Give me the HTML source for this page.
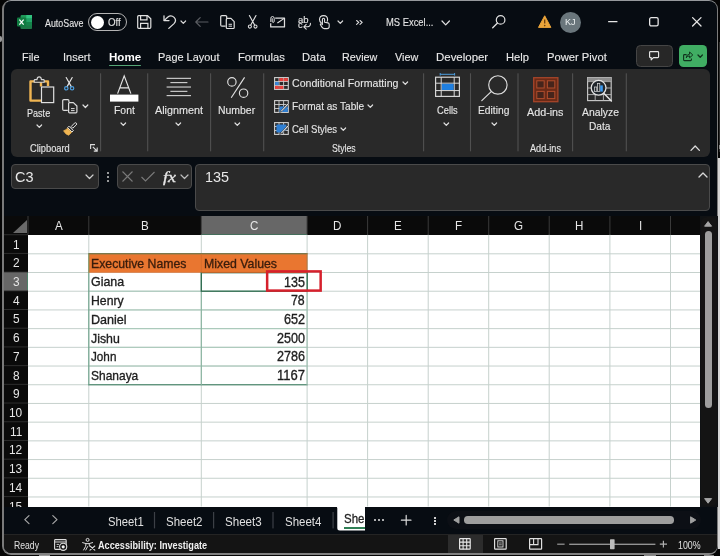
<!DOCTYPE html>
<html lang="en">
<head>
<meta charset="utf-8">
<title>MS Excel</title>
<style>
*{box-sizing:border-box;margin:0;padding:0}
html,body{width:720px;height:556px;overflow:hidden;background:#050505}
body{position:relative;font-family:"Liberation Sans",sans-serif;color:#e6e6e6;font-size:12px}
.abs{position:absolute}
svg{overflow:visible}
#win{position:absolute;left:2px;top:0;width:716px;height:555px;background:#070c12;border-style:solid;border-color:#96999c #7c7c7c #818181 #7a7a7a;border-width:1px 1px 2px 2px;border-radius:9px}
#app{position:absolute;left:0;top:0;width:720px;height:556px;overflow:hidden;will-change:transform}
.t{position:absolute;white-space:nowrap;line-height:20px;height:20px}
.t span{display:inline-block;transform-origin:0 50%}
</style>
</head>
<body>
<div id="win"></div>
<div id="app">
<!-- ===== title bar ===== -->
<svg class="abs" style="left:17px;top:15px;" width="15" height="14" viewBox="0 0 15 14"><rect x="3.6" y="0" width="11.4" height="14" rx="1.2" fill="#1f9a5a"/><rect x="9.3" y="0" width="5.7" height="3.5" fill="#33c481"/><rect x="9.3" y="3.5" width="5.7" height="3.5" fill="#21a366"/><rect x="3.6" y="3.5" width="5.7" height="3.5" fill="#107c41"/><rect x="3.6" y="7" width="11.4" height="7" fill="#185c37" opacity="0.55"/><rect x="9.3" y="7" width="5.7" height="3.5" fill="#13854a"/><rect x="0" y="2.6" width="9" height="9" rx="1" fill="#107c41"/><path d="M2.4 4.6 L6.6 9.6 M6.6 4.6 L2.4 9.6" stroke="#ffffff" stroke-width="1.25" fill="none"/></svg>
<div class="t" style="left:45px;top:13px;font-size:10.2px;color:#e4e4e4;transform:translate3d(0,0.50px,0);-webkit-text-stroke:0.12px currentColor;"><span style="transform:scaleX(0.8704)">AutoSave</span></div>
<div class="abs" style="left:88.2px;top:13px;width:38.6px;height:18.2px;border:1.3px solid #b4b4b4;border-radius:9.1px;"></div>
<div class="abs" style="left:91.2px;top:15.6px;width:13px;height:13px;background:#ffffff;border-radius:50%;"></div>
<div class="t" style="left:108px;top:13px;font-size:10.2px;color:#e4e4e4;transform:translate3d(0,0.30px,0);-webkit-text-stroke:0.1px currentColor;"><span style="transform:scaleX(0.9540)">Off</span></div>
<svg class="abs" style="left:137px;top:15px;" width="14.5" height="14" viewBox="0 0 14.5 14"><path d="M1.6 0.7 H10.6 L13.8 3.8 V12.2 Q13.8 13.3 12.7 13.3 H1.8 Q0.7 13.3 0.7 12.2 V1.7 Q0.7 0.7 1.6 0.7 Z" fill="none" stroke="#e0e0e0" stroke-width="1.2" stroke-linejoin="round"/><path d="M3.6 0.9 V4.8 H10 V0.9" fill="none" stroke="#e0e0e0" stroke-width="1.2"/><path d="M3.6 13.2 V8.3 H10.9 V13.2" fill="none" stroke="#e0e0e0" stroke-width="1.2"/></svg>
<svg class="abs" style="left:162.5px;top:15px;" width="13.5" height="14" viewBox="0 0 13.5 14"><path d="M1 0.8 V5.6 H6" fill="none" stroke="#e0e0e0" stroke-width="1.25" stroke-linecap="round" stroke-linejoin="round"/><path d="M1.3 5.4 L4.6 2.3 Q8 -0.4 11.1 2.4 Q14 5.6 11 8.6 L5.8 13.4" fill="none" stroke="#e0e0e0" stroke-width="1.25" stroke-linecap="round" stroke-linejoin="round"/></svg>
<svg class="abs" style="left:179.0px;top:18.6px;" width="8.6" height="6.4" viewBox="0 0 8.6 6.4"><path d="M2 2 L4.3 4.4 L6.6 2" fill="none" stroke="#d8d8d8" stroke-width="1.2" stroke-linecap="round" stroke-linejoin="round"/></svg>
<svg class="abs" style="left:195px;top:17px;" width="13" height="10" viewBox="0 0 13 10"><path d="M13 5 H1 M5.2 0.6 L0.8 5 L5.2 9.4" fill="none" stroke="#5a5d62" stroke-width="1.2" stroke-linecap="round" stroke-linejoin="round"/></svg>
<svg class="abs" style="left:220px;top:15px;" width="15" height="14.2" viewBox="0 0 15 14.2"><path d="M5.6 11.2 H2 Q0.7 11.2 0.7 10 V1.8 Q0.7 0.7 1.9 0.7 H5.6 Q6.7 0.7 6.7 1.8 V3.2" fill="none" stroke="#e0e0e0" stroke-width="1.2"/><path d="M6.3 4.4 Q6.3 3.4 7.3 3.4 H11 L14.2 6.6 V12.4 Q14.2 13.5 13.2 13.5 H7.3 Q6.3 13.5 6.3 12.4 Z" fill="none" stroke="#e0e0e0" stroke-width="1.2" stroke-linejoin="round"/><path d="M8.6 9.3 H12 M8.6 11.2 H12" stroke="#e0e0e0" stroke-width="1" fill="none"/></svg>
<svg class="abs" style="left:248px;top:15.3px;" width="9.4" height="13.8" viewBox="0 0 9.4 13.8"><path d="M1.4 0.5 L6.6 10 M8 0.5 L2.8 10" fill="none" stroke="#e0e0e0" stroke-width="1.15" stroke-linecap="round"/><circle cx="1.9" cy="11.6" r="1.55" fill="none" stroke="#e0e0e0" stroke-width="1.05"/><circle cx="7.5" cy="11.6" r="1.55" fill="none" stroke="#e0e0e0" stroke-width="1.05"/></svg>
<svg class="abs" style="left:270px;top:15.5px;" width="15.2" height="11.6" viewBox="0 0 15.2 11.6"><path d="M5.2 2.1 H14.5 V10.9 H0.7 V7.2" fill="none" stroke="#e0e0e0" stroke-width="1.25" stroke-linejoin="round"/><path d="M7.4 7 L14.2 2.4" fill="none" stroke="#e0e0e0" stroke-width="1.1"/><path d="M0.8 5.6 V2.4 Q0.8 0.5 2.5 0.5 Q4.2 0.5 4.2 2.4 V5.2 Q4.2 6.4 3.2 6.4 Q2.2 6.4 2.2 5.2 V2.6" fill="none" stroke="#e0e0e0" stroke-width="1" stroke-linecap="round"/></svg>
<div class="t" style="left:298px;top:9px;font-size:9.6px;color:#e4e4e4;transform:translate3d(0,0.50px,0);-webkit-text-stroke:0.12px currentColor;"><span style="transform:scaleX(0.9926)">ab</span></div>
<div class="t" style="left:298px;top:15px;font-size:9.6px;color:#e4e4e4;-webkit-text-stroke:0.12px currentColor;"><span style="transform:scaleX(0.9583)">c</span></div>
<svg class="abs" style="left:302.5px;top:22.5px;" width="8" height="6.5" viewBox="0 0 8 6.5"><path d="M7.4 0.4 Q7.6 3.6 4.6 3.8 H1 M3.2 1.4 L0.8 3.8 L3.2 6.1" fill="none" stroke="#e0e0e0" stroke-width="1.1" stroke-linecap="round" stroke-linejoin="round"/></svg>
<svg class="abs" style="left:319px;top:15px;" width="10.8" height="14.2" viewBox="0 0 10.8 14.2"><path d="M2.2 7.8 Q0.5 6.6 0.5 4.6 Q0.5 0.6 4.6 0.6 Q8.6 0.6 8.6 4.6 Q8.6 5.6 8.2 6.2" fill="none" stroke="#e0e0e0" stroke-width="1.1" stroke-linecap="round"/><path d="M3.4 9.6 V4.4 Q3.4 3.2 4.5 3.2 Q5.6 3.2 5.6 4.4 V7.2 L9 7.9 Q10.2 8.2 10.2 9.4 V11.4 Q10.2 13.6 8 13.6 H5.4 Q4 13.6 3.2 12.4 L1.4 9.8 Q1.2 9 2 8.8 Q2.7 8.7 3.4 9.6 Z" fill="none" stroke="#e0e0e0" stroke-width="1.1" stroke-linejoin="round"/></svg>
<svg class="abs" style="left:335.7px;top:18.7px;" width="8.6" height="6.4" viewBox="0 0 8.6 6.4"><path d="M2 2 L4.3 4.4 L6.6 2" fill="none" stroke="#d8d8d8" stroke-width="1.2" stroke-linecap="round" stroke-linejoin="round"/></svg>
<svg class="abs" style="left:356.4px;top:20.4px;" width="7" height="4.8" viewBox="0 0 7 4.8"><path d="M0.6 0.5 L2.8 2.4 L0.6 4.3 M4 0.5 L6.2 2.4 L4 4.3" fill="none" stroke="#e0e0e0" stroke-width="1.1" stroke-linecap="round" stroke-linejoin="round"/></svg>
<div class="t" style="left:386px;top:12px;font-size:10.6px;color:#e4e4e4;transform:translate3d(0,0.30px,0);-webkit-text-stroke:0.12px currentColor;"><span style="transform:scaleX(0.8862)">MS Excel...</span></div>
<svg class="abs" style="left:439.5px;top:18.650000000000002px;" width="11.4" height="7.9" viewBox="0 0 11.4 7.9"><path d="M2 2 L5.7 5.9 L9.4 2" fill="none" stroke="#e0e0e0" stroke-width="1.25" stroke-linecap="round" stroke-linejoin="round"/></svg>
<svg class="abs" style="left:491.8px;top:15.4px;" width="13.6" height="13.6" viewBox="0 0 13.6 13.6"><circle cx="8.6" cy="4.9" r="4.3" fill="none" stroke="#e0e0e0" stroke-width="1.2"/><path d="M5.5 8 L0.7 12.8" stroke="#e0e0e0" stroke-width="1.3" stroke-linecap="round" fill="none"/></svg>
<svg class="abs" style="left:537.6px;top:15.2px;" width="13.4" height="13.2" viewBox="0 0 13.4 13.2"><path d="M6.7 0.8 L12.9 12.4 H0.5 Z" fill="#eba53a" stroke="#eba53a" stroke-width="1" stroke-linejoin="round"/><path d="M6.7 4.6 V8.6" stroke="#6b3f10" stroke-width="1.3" fill="none"/><circle cx="6.7" cy="10.6" r="0.8" fill="#6b3f10"/></svg>
<div class="abs" style="left:559.6px;top:11.6px;width:21px;height:21px;background:#6a767c;border-radius:50%;"></div>
<div class="t" style="left:565px;top:12px;font-size:9.4px;color:#eef2f3;transform:translate3d(0,0.30px,0);-webkit-text-stroke:0;"><span style="transform:scaleX(0.9663)">KJ</span></div>
<svg class="abs" style="left:607.5px;top:21.2px;" width="9.6" height="1.4" viewBox="0 0 9.6 1.4"><rect x="0" y="0" width="9.6" height="1.3" rx="0.6" fill="#e6e6e6"/></svg>
<svg class="abs" style="left:649.2px;top:17.3px;" width="9.8" height="9.6" viewBox="0 0 9.8 9.6"><rect x="0.65" y="0.65" width="8.5" height="8.3" rx="1.6" fill="none" stroke="#e6e6e6" stroke-width="1.3"/></svg>
<svg class="abs" style="left:691.5px;top:17.4px;" width="9.6" height="9.6" viewBox="0 0 9.6 9.6"><path d="M0.6 0.6 L9 9 M9 0.6 L0.6 9" stroke="#e6e6e6" stroke-width="1.3" stroke-linecap="round" fill="none"/></svg>
<!-- ===== tabs ===== -->
<div class="t" style="left:22px;top:47px;font-size:11.3px;color:#e8e8e8;transform:translate3d(0,0.20px,0);-webkit-text-stroke:0.12px currentColor;"><span style="transform:scaleX(0.9611)">File</span></div>
<div class="t" style="left:63px;top:47px;font-size:11.3px;color:#e8e8e8;transform:translate3d(0,0.20px,0);-webkit-text-stroke:0.12px currentColor;"><span style="transform:scaleX(0.9731)">Insert</span></div>
<div class="t" style="left:109px;top:47px;font-size:11.3px;color:#ffffff;font-weight:bold;transform:translate3d(0,0.20px,0);-webkit-text-stroke:0;"><span style="transform:scaleX(1.0256)">Home</span></div>
<div class="t" style="left:158px;top:47px;font-size:11.3px;color:#e8e8e8;transform:translate3d(0,0.20px,0);-webkit-text-stroke:0.12px currentColor;"><span style="transform:scaleX(0.9691)">Page Layout</span></div>
<div class="t" style="left:238px;top:47px;font-size:11.3px;color:#e8e8e8;transform:translate3d(0,0.20px,0);-webkit-text-stroke:0.12px currentColor;"><span style="transform:scaleX(0.9937)">Formulas</span></div>
<div class="t" style="left:302px;top:47px;font-size:11.3px;color:#e8e8e8;transform:translate3d(0,0.20px,0);-webkit-text-stroke:0.12px currentColor;"><span style="transform:scaleX(0.9887)">Data</span></div>
<div class="t" style="left:342px;top:47px;font-size:11.3px;color:#e8e8e8;transform:translate3d(0,0.20px,0);-webkit-text-stroke:0.12px currentColor;"><span style="transform:scaleX(0.9527)">Review</span></div>
<div class="t" style="left:395px;top:47px;font-size:11.3px;color:#e8e8e8;transform:translate3d(0,0.20px,0);-webkit-text-stroke:0.12px currentColor;"><span style="transform:scaleX(0.9593)">View</span></div>
<div class="t" style="left:436px;top:47px;font-size:11.3px;color:#e8e8e8;transform:translate3d(0,0.20px,0);-webkit-text-stroke:0.12px currentColor;"><span style="transform:scaleX(1.0134)">Developer</span></div>
<div class="t" style="left:506px;top:47px;font-size:11.3px;color:#e8e8e8;transform:translate3d(0,0.20px,0);-webkit-text-stroke:0.12px currentColor;"><span style="transform:scaleX(0.9896)">Help</span></div>
<div class="t" style="left:547px;top:47px;font-size:11.3px;color:#e8e8e8;transform:translate3d(0,0.20px,0);-webkit-text-stroke:0.12px currentColor;"><span style="transform:scaleX(0.9918)">Power Pivot</span></div>
<div class="abs" style="left:108.7px;top:65.0px;width:32.3px;height:1.4px;background:#55a676;border-radius:1px;"></div>
<div class="abs" style="left:636.4px;top:45.4px;width:36.2px;height:21.2px;background:#272727;border:1px solid #454545;border-radius:4.5px;"></div>
<svg class="abs" style="left:649px;top:51.2px;" width="10.2" height="9.4" viewBox="0 0 10.2 9.4"><path d="M1.4 0.6 H8.8 Q9.6 0.6 9.6 1.4 V5.8 Q9.6 6.6 8.8 6.6 H4.4 L2.2 8.8 V6.6 H1.4 Q0.6 6.6 0.6 5.8 V1.4 Q0.6 0.6 1.4 0.6 Z" fill="none" stroke="#e6e6e6" stroke-width="1.15" stroke-linejoin="round"/></svg>
<div class="abs" style="left:679.4px;top:45.4px;width:27.6px;height:21.2px;background:#40ad63;border-radius:4.5px;"></div>
<svg class="abs" style="left:683px;top:50.8px;" width="10.4" height="10.2" viewBox="0 0 10.4 10.2"><path d="M3.6 3.6 H1.4 Q0.6 3.6 0.6 4.4 V8.8 Q0.6 9.6 1.4 9.6 H7.6 Q8.4 9.6 8.4 8.8 V7.6" fill="none" stroke="#10301c" stroke-width="1.1" stroke-linejoin="round"/><path d="M3.2 6.8 Q3.4 3.4 6.6 3.2 V1 L9.8 4 L6.6 6.8 V4.9 Q4.4 4.9 3.2 6.8 Z" fill="none" stroke="#10301c" stroke-width="1" stroke-linejoin="round"/></svg>
<svg class="abs" style="left:696.4px;top:53.050000000000004px;" width="8.4" height="6.3" viewBox="0 0 8.4 6.3"><path d="M2 2 L4.2 4.3 L6.4 2" fill="none" stroke="#10301c" stroke-width="1.25" stroke-linecap="round" stroke-linejoin="round"/></svg>
<!-- ===== ribbon ===== -->
<div class="abs" style="left:10.8px;top:69.4px;width:699px;height:87.2px;background:#292929;border-radius:6px;"></div>
<svg class="abs" style="left:0px;top:0px;" width="720" height="160" viewBox="0 0 720 160"><rect x="100.05" y="73.3" width="1.1" height="78" fill="#505050"/><rect x="147.15" y="73.3" width="1.1" height="78" fill="#505050"/><rect x="210.05" y="73.3" width="1.1" height="78" fill="#505050"/><rect x="263.15" y="73.3" width="1.1" height="78" fill="#505050"/><rect x="423.05" y="73.3" width="1.1" height="78" fill="#505050"/><rect x="469.95" y="73.3" width="1.1" height="78" fill="#505050"/><rect x="517.45" y="73.3" width="1.1" height="78" fill="#505050"/><rect x="572.05" y="73.3" width="1.1" height="78" fill="#505050"/><rect x="625.75" y="73.3" width="1.1" height="78" fill="#505050"/></svg>
<svg class="abs" style="left:28.5px;top:75.8px;" width="25.5" height="27.5" viewBox="0 0 25.5 27.5"><path d="M12 10.4 V5.4 H1.5 V24.6 H12" fill="none" stroke="#f0b552" stroke-width="2.4" stroke-linejoin="round"/><path d="M19 10 V5.4 H14" fill="none" stroke="#f0b552" stroke-width="2.4" stroke-linejoin="round"/><path d="M5.2 6.2 V4.4 Q5.2 3.6 6 3.6 H8 Q8.2 0.9 10.2 0.9 Q12.2 0.9 12.4 3.6 H14.4 Q15.2 3.6 15.2 4.4 V6.2 Z" fill="#292929" stroke="#d8d8d8" stroke-width="1.1" stroke-linejoin="round"/><rect x="12.5" y="11" width="12.2" height="15.6" fill="#2c2c2c" stroke="#e0e0e0" stroke-width="1.2"/></svg>
<div class="t" style="left:27px;top:104px;font-size:10.4px;color:#e6e6e6;-webkit-text-stroke:0.12px currentColor;"><span style="transform:scaleX(0.8724)">Paste</span></div>
<svg class="abs" style="left:34.7px;top:123.3px;" width="8.6" height="6.4" viewBox="0 0 8.6 6.4"><path d="M2 2 L4.3 4.4 L6.6 2" fill="none" stroke="#e0e0e0" stroke-width="1.2" stroke-linecap="round" stroke-linejoin="round"/></svg>
<svg class="abs" style="left:64.4px;top:76.8px;" width="10.4" height="13.8" viewBox="0 0 10.4 13.8"><path d="M2.2 0.5 L7.3 9.6 M8.2 0.5 L3.1 9.6" fill="none" stroke="#e6e6e6" stroke-width="1.15" stroke-linecap="round"/><circle cx="2.3" cy="11.3" r="1.7" fill="none" stroke="#4d9fe0" stroke-width="1.2"/><circle cx="8.1" cy="11.3" r="1.7" fill="none" stroke="#4d9fe0" stroke-width="1.2"/></svg>
<svg class="abs" style="left:61.8px;top:98.6px;" width="15.8" height="14.6" viewBox="0 0 15.8 14.6"><path d="M5.8 11.4 H2 Q0.7 11.4 0.7 10.2 V1.8 Q0.7 0.7 1.9 0.7 H5.8 Q6.9 0.7 6.9 1.8 V3.2" fill="none" stroke="#dcdcdc" stroke-width="1.2"/><path d="M6.6 4.6 Q6.6 3.6 7.6 3.6 H11.4 L14.9 7 V12.8 Q14.9 13.9 13.9 13.9 H7.6 Q6.6 13.9 6.6 12.8 Z" fill="none" stroke="#dcdcdc" stroke-width="1.2" stroke-linejoin="round"/><path d="M9 9.6 H12.6 M9 11.6 H12.6" stroke="#dcdcdc" stroke-width="1" fill="none"/></svg>
<svg class="abs" style="left:81.3px;top:103.35px;" width="8.8" height="6.5" viewBox="0 0 8.8 6.5"><path d="M2 2 L4.4 4.5 L6.8 2" fill="none" stroke="#e0e0e0" stroke-width="1.2" stroke-linecap="round" stroke-linejoin="round"/></svg>
<svg class="abs" style="left:62.6px;top:121.6px;" width="14.4" height="13.6" viewBox="0 0 14.4 13.6"><path d="M13.4 1.2 Q12.4 0.2 11.4 1.2 L8.2 4.6 L9.8 6.2 L13.2 3 Q14.2 2 13.4 1.2 Z" fill="none" stroke="#e0e0e0" stroke-width="1"/><path d="M6 4.2 L10.4 8.6 L9 10 L4.6 5.6 Z" fill="none" stroke="#e0e0e0" stroke-width="1" stroke-linejoin="round"/><path d="M4.4 6.2 L8.6 10.4 L5.6 13.2 Q2.4 12.4 0.6 8.8 Q3 8.2 4.4 6.2 Z" fill="#f0b552" stroke="#f0b552" stroke-width="0.8" stroke-linejoin="round"/></svg>
<div class="t" style="left:30px;top:138px;font-size:10.6px;color:#e6e6e6;-webkit-text-stroke:0.12px currentColor;"><span style="transform:scaleX(0.8772)">Clipboard</span></div>
<svg class="abs" style="left:89.8px;top:144.1px;" width="8" height="7.6" viewBox="0 0 8 7.6"><path d="M0.6 5 V0.6 H5" fill="none" stroke="#dcdcdc" stroke-width="1.1"/><path d="M2.8 2.8 L7 7 M7.2 3.6 V7.1 H3.8" fill="none" stroke="#dcdcdc" stroke-width="1.1"/></svg>
<svg class="abs" style="left:110px;top:75px;" width="28.5" height="27" viewBox="0 0 28.5 27"><path d="M7.6 18.6 L14.2 0.8 L20.9 18.6 M9.8 12.8 H18.7" fill="none" stroke="#e6e6e6" stroke-width="1.15" stroke-linejoin="miter"/><rect x="0" y="19.6" width="28.4" height="7" fill="#ffffff"/></svg>
<div class="t" style="left:114px;top:101px;font-size:10.4px;color:#e6e6e6;transform:translate3d(0,0.30px,0);-webkit-text-stroke:0.12px currentColor;">Font</div>
<svg class="abs" style="left:119.4px;top:120.7px;" width="8.6" height="6.4" viewBox="0 0 8.6 6.4"><path d="M2 2 L4.3 4.4 L6.6 2" fill="none" stroke="#e0e0e0" stroke-width="1.2" stroke-linecap="round" stroke-linejoin="round"/></svg>
<svg class="abs" style="left:0px;top:0px;" width="720" height="160" viewBox="0 0 720 160"><rect x="166.6" y="77.8" width="24.4" height="1.05" fill="#dcdcdc"/><rect x="170.4" y="82.1" width="17" height="1.05" fill="#dcdcdc"/><rect x="166.6" y="86.5" width="24.4" height="1.05" fill="#dcdcdc"/><rect x="170.4" y="90.8" width="17" height="1.05" fill="#dcdcdc"/><rect x="166.6" y="95.1" width="24.4" height="1.05" fill="#dcdcdc"/></svg>
<div class="t" style="left:155px;top:101px;font-size:10.4px;color:#e6e6e6;transform:translate3d(0,0.30px,0);-webkit-text-stroke:0.12px currentColor;"><span style="transform:scaleX(1.0379)">Alignment</span></div>
<svg class="abs" style="left:174.2px;top:120.7px;" width="8.6" height="6.4" viewBox="0 0 8.6 6.4"><path d="M2 2 L4.3 4.4 L6.6 2" fill="none" stroke="#e0e0e0" stroke-width="1.2" stroke-linecap="round" stroke-linejoin="round"/></svg>
<svg class="abs" style="left:226.8px;top:77px;" width="21.6" height="21.2" viewBox="0 0 21.6 21.2"><circle cx="4.9" cy="4.9" r="4.2" fill="none" stroke="#e0e0e0" stroke-width="1.15"/><circle cx="16.6" cy="16.2" r="4.2" fill="none" stroke="#e0e0e0" stroke-width="1.15"/><path d="M17.6 0.4 L4.2 20.8" fill="none" stroke="#e0e0e0" stroke-width="1.15"/></svg>
<div class="t" style="left:218px;top:101px;font-size:10.4px;color:#e6e6e6;transform:translate3d(0,0.30px,0);-webkit-text-stroke:0.12px currentColor;"><span style="transform:scaleX(1.0057)">Number</span></div>
<svg class="abs" style="left:232.6px;top:120.7px;" width="8.6" height="6.4" viewBox="0 0 8.6 6.4"><path d="M2 2 L4.3 4.4 L6.6 2" fill="none" stroke="#e0e0e0" stroke-width="1.2" stroke-linecap="round" stroke-linejoin="round"/></svg>
<svg class="abs" style="left:274.2px;top:77.1px;" width="15" height="13" viewBox="0 0 15 13"><rect x="0.6" y="0.6" width="13.7" height="11.8" fill="#2a2a2a" stroke="#d0d0d0" stroke-width="1.1"/><path d="M5 0.6 V12.4 M9.6 0.6 V12.4 M0.6 4.5 H14.3 M0.6 8.5 H14.3" stroke="#d0d0d0" stroke-width="0.9" fill="none"/><rect x="5.3" y="1.1" width="4" height="3" fill="#e8413c"/><rect x="9.9" y="1.1" width="4" height="3" fill="#e8413c"/><rect x="1.1" y="4.9" width="3.6" height="3.2" fill="#3b86d8"/><rect x="1.1" y="8.9" width="3.6" height="3.1" fill="#e8413c"/><rect x="5.3" y="8.9" width="4" height="3.1" fill="#e8413c"/></svg>
<svg class="abs" style="left:274.2px;top:99.8px;" width="15" height="13" viewBox="0 0 15 13"><rect x="0.6" y="0.6" width="13.7" height="11.8" fill="#2a2a2a" stroke="#d0d0d0" stroke-width="1.1"/><path d="M5 0.6 V12.4 M9.6 0.6 V12.4 M0.6 4.5 H14.3 M0.6 8.5 H14.3" stroke="#d0d0d0" stroke-width="0.9" fill="none"/><path d="M5.4 6.4 H13.8 V12 H5.4 Z" fill="#2f7fd3"/><path d="M13.6 3.4 L7 10.4 L5.6 12.6 L8 11.4 L14.6 4.6 Z" fill="#e8e8e8" stroke="#2a2a2a" stroke-width="0.6"/></svg>
<svg class="abs" style="left:274.2px;top:122.4px;" width="15" height="13" viewBox="0 0 15 13"><rect x="0.6" y="0.6" width="13.7" height="11.8" fill="#2a2a2a" stroke="#d0d0d0" stroke-width="1.1"/><path d="M5 0.6 V12.4 M9.6 0.6 V12.4 M0.6 4.5 H14.3 M0.6 8.5 H14.3" stroke="#d0d0d0" stroke-width="0.9" fill="none"/><path d="M2.4 2.6 H12.4 V8.4 H9.4 V10.6 H2.4 Z" fill="#2f7fd3"/><path d="M13.6 3.4 L7 10.4 L5.6 12.6 L8 11.4 L14.6 4.6 Z" fill="#e8e8e8" stroke="#2a2a2a" stroke-width="0.6"/></svg>
<div class="t" style="left:292px;top:74px;font-size:10.4px;color:#e6e6e6;transform:translate3d(0,0.40px,0);-webkit-text-stroke:0.12px currentColor;"><span style="transform:scaleX(1.0178)">Conditional Formatting</span></div>
<svg class="abs" style="left:401.3px;top:80.39999999999999px;" width="8.6" height="6.4" viewBox="0 0 8.6 6.4"><path d="M2 2 L4.3 4.4 L6.6 2" fill="none" stroke="#e0e0e0" stroke-width="1.2" stroke-linecap="round" stroke-linejoin="round"/></svg>
<div class="t" style="left:292px;top:96px;font-size:10.4px;color:#e6e6e6;transform:translate3d(0,0.80px,0);-webkit-text-stroke:0.12px currentColor;"><span style="transform:scaleX(0.9707)">Format as Table</span></div>
<svg class="abs" style="left:366.3px;top:103.0px;" width="8.6" height="6.4" viewBox="0 0 8.6 6.4"><path d="M2 2 L4.3 4.4 L6.6 2" fill="none" stroke="#e0e0e0" stroke-width="1.2" stroke-linecap="round" stroke-linejoin="round"/></svg>
<div class="t" style="left:292px;top:119px;font-size:10.4px;color:#e6e6e6;transform:translate3d(0,0.50px,0);-webkit-text-stroke:0.12px currentColor;"><span style="transform:scaleX(0.9160)">Cell Styles</span></div>
<svg class="abs" style="left:339.09999999999997px;top:125.60000000000001px;" width="8.6" height="6.4" viewBox="0 0 8.6 6.4"><path d="M2 2 L4.3 4.4 L6.6 2" fill="none" stroke="#e0e0e0" stroke-width="1.2" stroke-linecap="round" stroke-linejoin="round"/></svg>
<div class="t" style="left:332px;top:138px;font-size:10.6px;color:#e6e6e6;transform:translate3d(0,0.20px,0);-webkit-text-stroke:0.12px currentColor;"><span style="transform:scaleX(0.8176)">Styles</span></div>
<svg class="abs" style="left:434.8px;top:73.4px;" width="25" height="24.2" viewBox="0 0 25 24.2"><path d="M5.2 1.3 H19.6 M5.2 0 V2.6 M19.6 0 V2.6" stroke="#4d9fe0" stroke-width="1" fill="none"/><rect x="0.6" y="4.2" width="23.8" height="19.2" fill="none" stroke="#dcdcdc" stroke-width="1.15"/><path d="M6.2 4.2 V23.4 M19.2 4.2 V23.4 M0.6 10.2 H24.4 M0.6 17.6 H24.4" stroke="#dcdcdc" stroke-width="1" fill="none"/><rect x="6.8" y="10.8" width="11.8" height="6.2" fill="#1f7fe0"/></svg>
<div class="t" style="left:437px;top:101px;font-size:10.4px;color:#e6e6e6;transform:translate3d(0,0.30px,0);-webkit-text-stroke:0.12px currentColor;"><span style="transform:scaleX(0.8955)">Cells</span></div>
<svg class="abs" style="left:442.2px;top:120.7px;" width="8.6" height="6.4" viewBox="0 0 8.6 6.4"><path d="M2 2 L4.3 4.4 L6.6 2" fill="none" stroke="#e0e0e0" stroke-width="1.2" stroke-linecap="round" stroke-linejoin="round"/></svg>
<svg class="abs" style="left:480.6px;top:74.6px;" width="27" height="26.4" viewBox="0 0 27 26.4"><circle cx="16.9" cy="10" r="9.2" fill="none" stroke="#dcdcdc" stroke-width="1.15"/><path d="M10.2 16.6 L0.8 25.6" stroke="#dcdcdc" stroke-width="1.2" stroke-linecap="round" fill="none"/></svg>
<div class="t" style="left:478px;top:101px;font-size:10.4px;color:#e6e6e6;transform:translate3d(0,0.30px,0);-webkit-text-stroke:0.12px currentColor;"><span style="transform:scaleX(0.9874)">Editing</span></div>
<svg class="abs" style="left:489.7px;top:120.7px;" width="8.6" height="6.4" viewBox="0 0 8.6 6.4"><path d="M2 2 L4.3 4.4 L6.6 2" fill="none" stroke="#e0e0e0" stroke-width="1.2" stroke-linecap="round" stroke-linejoin="round"/></svg>
<svg class="abs" style="left:532.8px;top:76.6px;" width="25.6" height="25.4" viewBox="0 0 25.6 25.4"><rect x="0.7" y="0.7" width="24.2" height="24" fill="#6a2a17" stroke="#a5452a" stroke-width="1.3"/><rect x="3.8" y="3.8" width="7.4" height="7.2" fill="#45241b" stroke="#b04e2e" stroke-width="1"/><rect x="14.4" y="3.8" width="7.4" height="7.2" fill="#45241b" stroke="#b04e2e" stroke-width="1"/><rect x="3.8" y="14.4" width="7.4" height="7.2" fill="#45241b" stroke="#b04e2e" stroke-width="1"/><rect x="14.4" y="14.4" width="7.4" height="7.2" fill="#45241b" stroke="#b04e2e" stroke-width="1"/></svg>
<div class="t" style="left:527px;top:103px;font-size:10.4px;color:#e6e6e6;-webkit-text-stroke:0.12px currentColor;"><span style="transform:scaleX(1.0350)">Add-ins</span></div>
<div class="t" style="left:530px;top:138px;font-size:10.6px;color:#e6e6e6;transform:translate3d(0,0.20px,0);-webkit-text-stroke:0.12px currentColor;"><span style="transform:scaleX(0.8625)">Add-ins</span></div>
<svg class="abs" style="left:587.2px;top:77px;" width="25.4" height="25" viewBox="0 0 25.4 25"><rect x="0.6" y="0.6" width="23.6" height="23" fill="none" stroke="#c8c8c8" stroke-width="1.15"/><path d="M0.6 4.6 H24.2 M0.6 11 H24.2 M0.6 17.6 H24.2 M8.2 4.6 V23.6 M16.4 4.6 V23.6" stroke="#b8b8b8" stroke-width="0.9" fill="none"/><rect x="0.6" y="0.6" width="23.6" height="3.6" fill="#8e8e8e"/><circle cx="11.6" cy="10.8" r="7.4" fill="#20262c" stroke="#e4e4e4" stroke-width="1.25"/><rect x="7.6" y="10" width="2.2" height="4.6" fill="none" stroke="#dcdcdc" stroke-width="0.7"/><rect x="10.4" y="6.6" width="2.4" height="8" fill="none" stroke="#dcdcdc" stroke-width="0.7"/><rect x="13.2" y="8.4" width="2.6" height="6.2" fill="#3b9af0"/><path d="M17 16.4 L24.4 24" stroke="#e4e4e4" stroke-width="1.5" stroke-linecap="round" fill="none"/></svg>
<div class="t" style="left:582px;top:103px;font-size:10.4px;color:#e6e6e6;-webkit-text-stroke:0.12px currentColor;">Analyze</div>
<div class="t" style="left:589px;top:117px;font-size:10.4px;color:#e6e6e6;-webkit-text-stroke:0.12px currentColor;"><span style="transform:scaleX(0.9787)">Data</span></div>
<svg class="abs" style="left:689.1999999999999px;top:143.5px;" width="12.4" height="8.4" viewBox="0 0 12.4 8.4"><path d="M2 6.4 L6.2 2 L10.4 6.4" fill="none" stroke="#dcdcdc" stroke-width="1.3" stroke-linecap="round" stroke-linejoin="round"/></svg>
<!-- ===== formula bar ===== -->
<div class="abs" style="left:10.5px;top:164px;width:88.7px;height:24.8px;background:#292929;border:1px solid #4a4a4a;border-radius:4px;"></div>
<div class="t" style="left:15px;top:166px;font-size:14.5px;color:#e8e8e8;transform:translate3d(0,0.50px,0);">C3</div>
<svg class="abs" style="left:84.0px;top:173.25px;" width="11" height="7.5" viewBox="0 0 11 7.5"><path d="M2 2 L5.5 5.5 L9 2" fill="none" stroke="#d0d0d0" stroke-width="1.2" stroke-linecap="round" stroke-linejoin="round"/></svg>
<div class="abs" style="left:106.5px;top:172px;width:2px;height:2px;background:#c8c8c8;border-radius:1px;"></div>
<div class="abs" style="left:106.5px;top:176px;width:2px;height:2px;background:#c8c8c8;border-radius:1px;"></div>
<div class="abs" style="left:106.5px;top:180px;width:2px;height:2px;background:#c8c8c8;border-radius:1px;"></div>
<div class="abs" style="left:117px;top:164px;width:75px;height:25px;background:#292929;border:1px solid #4a4a4a;border-radius:4px;"></div>
<svg class="abs" style="left:122px;top:171px;" width="11" height="11" viewBox="0 0 11 11"><path d="M0.5 0.5 L10.5 10.5 M10.5 0.5 L0.5 10.5" stroke="#7a7a7a" stroke-width="1.1" fill="none"/></svg>
<svg class="abs" style="left:141px;top:171px;" width="14" height="11" viewBox="0 0 14 11"><path d="M0.5 6 L4.5 10 L13.5 1" stroke="#7a7a7a" stroke-width="1.1" fill="none"/></svg>
<div class="t" style="left:163px;top:166px;font-size:14.5px;color:#e6e6e6;font-style:italic;font-family:&quot;Liberation Serif&quot;,serif;transform:translate3d(0,0.50px,0);-webkit-text-stroke:0.3px currentColor;"><span style="transform:scaleX(1.2424)">fx</span></div>
<svg class="abs" style="left:179.0px;top:173.25px;" width="11" height="7.5" viewBox="0 0 11 7.5"><path d="M2 2 L5.5 5.5 L9 2" fill="none" stroke="#bdbdbd" stroke-width="1.2" stroke-linecap="round" stroke-linejoin="round"/></svg>
<div class="abs" style="left:195px;top:164px;width:515px;height:47px;background:#292929;border:1px solid #4a4a4a;border-radius:4px;"></div>
<div class="t" style="left:205px;top:166px;font-size:14.5px;color:#e8e8e8;transform:translate3d(0,0.50px,0);"><span style="transform:scaleX(0.9920)">135</span></div>
<svg class="abs" style="left:696.5px;top:170.5px;" width="12" height="8" viewBox="0 0 12 8"><path d="M2 6 L6.0 2 L10 6" fill="none" stroke="#d8d8d8" stroke-width="1.3" stroke-linecap="round" stroke-linejoin="round"/></svg>
<!-- ===== grid ===== -->
<div class="abs" style="left:28px;top:216px;width:672px;height:290.5px;background:#ffffff;"></div>
<div class="abs" style="left:4px;top:216px;width:696px;height:18.69999999999999px;background:#0a0a0a;"></div>
<div class="abs" style="left:4px;top:216px;width:24px;height:290.5px;background:#0a0a0a;"></div>
<div class="abs" style="left:201.3px;top:216px;width:105.8px;height:18.899999999999977px;background:#676767;border-bottom:1.6px solid #456e5b;"></div>
<div class="abs" style="left:4px;top:272.11px;width:24px;height:18.705px;background:#676767;border-right:1px solid #4f7f68;border-top:1px solid #858585;border-bottom:1px solid #858585;"></div>
<svg class="abs" style="left:12.5px;top:219.5px;" width="14" height="13" viewBox="0 0 14 13"><path d="M14 0 L14 13 L0 13 Z" fill="#6a6a6a"/></svg>
<svg class="abs" style="left:0px;top:0px;pointer-events:none;" width="720" height="506.5" viewBox="0 0 720 506.5"><rect x="88.30" y="234.7" width="1" height="271.8" fill="#c6d1cd"/><rect x="200.80" y="234.7" width="1" height="271.8" fill="#c6d1cd"/><rect x="306.60" y="234.7" width="1" height="271.8" fill="#c6d1cd"/><rect x="367.10" y="234.7" width="1" height="271.8" fill="#c6d1cd"/><rect x="427.70" y="234.7" width="1" height="271.8" fill="#c6d1cd"/><rect x="488.20" y="234.7" width="1" height="271.8" fill="#c6d1cd"/><rect x="548.70" y="234.7" width="1" height="271.8" fill="#c6d1cd"/><rect x="609.40" y="234.7" width="1" height="271.8" fill="#c6d1cd"/><rect x="670.00" y="234.7" width="1" height="271.8" fill="#c6d1cd"/><rect x="28" y="253.31" width="672" height="1" fill="#c6d1cd"/><rect x="28" y="272.01" width="672" height="1" fill="#c6d1cd"/><rect x="28" y="290.71" width="672" height="1" fill="#c6d1cd"/><rect x="28" y="309.42" width="672" height="1" fill="#c6d1cd"/><rect x="28" y="328.12" width="672" height="1" fill="#c6d1cd"/><rect x="28" y="346.83" width="672" height="1" fill="#c6d1cd"/><rect x="28" y="365.53" width="672" height="1" fill="#c6d1cd"/><rect x="28" y="384.24" width="672" height="1" fill="#c6d1cd"/><rect x="28" y="402.94" width="672" height="1" fill="#c6d1cd"/><rect x="28" y="421.65" width="672" height="1" fill="#c6d1cd"/><rect x="28" y="440.36" width="672" height="1" fill="#c6d1cd"/><rect x="28" y="459.06" width="672" height="1" fill="#c6d1cd"/><rect x="28" y="477.76" width="672" height="1" fill="#c6d1cd"/><rect x="28" y="496.47" width="672" height="1" fill="#c6d1cd"/><rect x="27.50" y="216" width="1" height="18.69999999999999" fill="#3a3a3a"/><rect x="88.30" y="216" width="1" height="18.69999999999999" fill="#3a3a3a"/><rect x="200.80" y="216" width="1" height="18.69999999999999" fill="#3a3a3a"/><rect x="306.60" y="216" width="1" height="18.69999999999999" fill="#3a3a3a"/><rect x="367.10" y="216" width="1" height="18.69999999999999" fill="#3a3a3a"/><rect x="427.70" y="216" width="1" height="18.69999999999999" fill="#3a3a3a"/><rect x="488.20" y="216" width="1" height="18.69999999999999" fill="#3a3a3a"/><rect x="548.70" y="216" width="1" height="18.69999999999999" fill="#3a3a3a"/><rect x="609.40" y="216" width="1" height="18.69999999999999" fill="#3a3a3a"/><rect x="670.00" y="216" width="1" height="18.69999999999999" fill="#3a3a3a"/><rect x="4" y="234.20" width="24" height="1" fill="#2e2e2e"/><rect x="4" y="252.90" width="24" height="1" fill="#2e2e2e"/><rect x="4" y="271.61" width="24" height="1" fill="#2e2e2e"/><rect x="4" y="290.31" width="24" height="1" fill="#2e2e2e"/><rect x="4" y="309.02" width="24" height="1" fill="#2e2e2e"/><rect x="4" y="327.72" width="24" height="1" fill="#2e2e2e"/><rect x="4" y="346.43" width="24" height="1" fill="#2e2e2e"/><rect x="4" y="365.13" width="24" height="1" fill="#2e2e2e"/><rect x="4" y="383.84" width="24" height="1" fill="#2e2e2e"/><rect x="4" y="402.54" width="24" height="1" fill="#2e2e2e"/><rect x="4" y="421.25" width="24" height="1" fill="#2e2e2e"/><rect x="4" y="439.95" width="24" height="1" fill="#2e2e2e"/><rect x="4" y="458.66" width="24" height="1" fill="#2e2e2e"/><rect x="4" y="477.36" width="24" height="1" fill="#2e2e2e"/><rect x="4" y="496.07" width="24" height="1" fill="#2e2e2e"/></svg>
<div class="t" style="left:55px;top:216px;font-size:13.5px;color:#e6e6e6;"><span style="transform:scaleX(0.8600)">A</span></div>
<div class="t" style="left:141px;top:216px;font-size:13.5px;color:#e6e6e6;"><span style="transform:scaleX(0.8600)">B</span></div>
<div class="t" style="left:250px;top:216px;font-size:13.5px;color:#e6e6e6;"><span style="transform:scaleX(0.8600)">C</span></div>
<div class="t" style="left:333px;top:216px;font-size:13.5px;color:#e6e6e6;"><span style="transform:scaleX(0.8600)">D</span></div>
<div class="t" style="left:394px;top:216px;font-size:13.5px;color:#e6e6e6;"><span style="transform:scaleX(0.8600)">E</span></div>
<div class="t" style="left:455px;top:216px;font-size:13.5px;color:#e6e6e6;"><span style="transform:scaleX(0.8600)">F</span></div>
<div class="t" style="left:514px;top:216px;font-size:13.5px;color:#e6e6e6;"><span style="transform:scaleX(0.8600)">G</span></div>
<div class="t" style="left:575px;top:216px;font-size:13.5px;color:#e6e6e6;"><span style="transform:scaleX(0.8600)">H</span></div>
<div class="t" style="left:639px;top:216px;font-size:13.5px;color:#e6e6e6;"><span style="transform:scaleX(0.8600)">I</span></div>
<div class="t" style="left:13px;top:234px;font-size:13.5px;color:#e6e6e6;transform:translate3d(0,0.65px,0);"><span style="transform:scaleX(0.8800)">1</span></div>
<div class="t" style="left:13px;top:253px;font-size:13.5px;color:#e6e6e6;transform:translate3d(0,0.36px,0);"><span style="transform:scaleX(0.8800)">2</span></div>
<div class="t" style="left:13px;top:272px;font-size:13.5px;color:#e6e6e6;"><span style="transform:scaleX(0.8800)">3</span></div>
<div class="t" style="left:13px;top:290px;font-size:13.5px;color:#e6e6e6;transform:translate3d(0,0.77px,0);"><span style="transform:scaleX(0.8800)">4</span></div>
<div class="t" style="left:13px;top:309px;font-size:13.5px;color:#e6e6e6;transform:translate3d(0,0.47px,0);"><span style="transform:scaleX(0.8800)">5</span></div>
<div class="t" style="left:13px;top:328px;font-size:13.5px;color:#e6e6e6;transform:translate3d(0,0.18px,0);"><span style="transform:scaleX(0.8800)">6</span></div>
<div class="t" style="left:13px;top:347px;font-size:13.5px;color:#e6e6e6;"><span style="transform:scaleX(0.8800)">7</span></div>
<div class="t" style="left:13px;top:365px;font-size:13.5px;color:#e6e6e6;transform:translate3d(0,0.59px,0);"><span style="transform:scaleX(0.8800)">8</span></div>
<div class="t" style="left:13px;top:384px;font-size:13.5px;color:#e6e6e6;transform:translate3d(0,0.29px,0);"><span style="transform:scaleX(0.8800)">9</span></div>
<div class="t" style="left:9px;top:403px;font-size:13.5px;color:#e6e6e6;"><span style="transform:scaleX(0.8800)">10</span></div>
<div class="t" style="left:10px;top:421px;font-size:13.5px;color:#e6e6e6;transform:translate3d(0,0.70px,0);"><span style="transform:scaleX(0.8800)">11</span></div>
<div class="t" style="left:9px;top:440px;font-size:13.5px;color:#e6e6e6;transform:translate3d(0,0.41px,0);"><span style="transform:scaleX(0.8800)">12</span></div>
<div class="t" style="left:9px;top:459px;font-size:13.5px;color:#e6e6e6;"><span style="transform:scaleX(0.8800)">13</span></div>
<div class="t" style="left:9px;top:477px;font-size:13.5px;color:#e6e6e6;transform:translate3d(0,0.82px,0);"><span style="transform:scaleX(0.8800)">14</span></div>
<div class="t" style="left:9px;top:496px;font-size:13.5px;color:#e6e6e6;transform:translate3d(0,0.52px,0);"><span style="transform:scaleX(0.8800)">15</span></div>
<div class="abs" style="left:88.5px;top:253.405px;width:218.7px;height:18.904999999999998px;background:#e97630;"></div>
<svg class="abs" style="left:0px;top:0px;pointer-events:none;" width="720" height="506.5" viewBox="0 0 720 506.5"><rect x="88.3" y="253.21" width="219.4" height="1.1" fill="#5d7a55"/><rect x="88.3" y="272.01" width="113" height="1" fill="#d98b5a"/><rect x="88.3" y="290.66" width="219.4" height="1.1" fill="#a9c9ba"/><rect x="88.3" y="309.37" width="219.4" height="1.1" fill="#a9c9ba"/><rect x="88.3" y="328.07" width="219.4" height="1.1" fill="#a9c9ba"/><rect x="88.3" y="346.78" width="219.4" height="1.1" fill="#a9c9ba"/><rect x="88.3" y="365.48" width="219.4" height="1.1" fill="#a9c9ba"/><rect x="88.3" y="384.14" width="219.4" height="1.2" fill="#4f8a70"/><rect x="88.25" y="272.51" width="1.1" height="112.73" fill="#6ea38a"/><rect x="200.75" y="272.51" width="1.1" height="112.73" fill="#86b29e"/><rect x="306.55" y="272.51" width="1.1" height="112.73" fill="#9dbfb0"/><rect x="88.25" y="253.31" width="1.1" height="19.20" fill="#7a8a55"/><rect x="200.75" y="254.31" width="1.1" height="17.70" fill="#d86f2c"/><rect x="306.55" y="253.31" width="1.1" height="19.20" fill="#b07a45"/><rect x="201.3" y="272.71" width="105.9" height="18.50" fill="none" stroke="#2d6a4d" stroke-width="1.25"/><rect x="201.3" y="271.91" width="105.9" height="1" fill="#c9662a"/><rect x="267.15" y="271.4" width="53.5" height="19.2" fill="none" stroke="#d6202c" stroke-width="2.5"/></svg>
<div class="t" style="left:91px;top:253px;font-size:13.3px;color:#3a1d0c;transform:translate3d(0,0.86px,0);-webkit-text-stroke:0.35px currentColor;"><span style="transform:scaleX(0.9228)">Executive Names</span></div>
<div class="t" style="left:204px;top:253px;font-size:13.3px;color:#3a1d0c;transform:translate3d(0,0.86px,0);-webkit-text-stroke:0.35px currentColor;"><span style="transform:scaleX(0.9258)">Mixed Values</span></div>
<div class="t" style="left:91px;top:272px;font-size:13.3px;color:#1e1e1e;transform:translate3d(0,0.46px,0);-webkit-text-stroke:0.35px currentColor;"><span style="transform:scaleX(0.9354)">Giana</span></div>
<div class="t" style="left:284px;top:271px;font-size:13.9px;color:#1e1e1e;transform:translate3d(0,0.51px,0);-webkit-text-stroke:0.35px currentColor;"><span style="transform:scaleX(0.9012)">135</span></div>
<div class="t" style="left:91px;top:291px;font-size:13.3px;color:#1e1e1e;transform:translate3d(0,0.17px,0);-webkit-text-stroke:0.35px currentColor;"><span style="transform:scaleX(0.9217)">Henry</span></div>
<div class="t" style="left:291px;top:290px;font-size:13.9px;color:#1e1e1e;transform:translate3d(0,0.22px,0);-webkit-text-stroke:0.35px currentColor;"><span style="transform:scaleX(0.8861)">78</span></div>
<div class="t" style="left:91px;top:310px;font-size:13.3px;color:#1e1e1e;-webkit-text-stroke:0.35px currentColor;"><span style="transform:scaleX(0.9441)">Daniel</span></div>
<div class="t" style="left:284px;top:309px;font-size:13.9px;color:#1e1e1e;-webkit-text-stroke:0.35px currentColor;"><span style="transform:scaleX(0.9098)">652</span></div>
<div class="t" style="left:91px;top:328px;font-size:13.3px;color:#1e1e1e;transform:translate3d(0,0.58px,0);-webkit-text-stroke:0.35px currentColor;"><span style="transform:scaleX(0.9276)">Jishu</span></div>
<div class="t" style="left:277px;top:327px;font-size:13.9px;color:#1e1e1e;transform:translate3d(0,0.63px,0);-webkit-text-stroke:0.35px currentColor;"><span style="transform:scaleX(0.9055)">2500</span></div>
<div class="t" style="left:91px;top:347px;font-size:13.3px;color:#1e1e1e;transform:translate3d(0,0.28px,0);-webkit-text-stroke:0.35px currentColor;"><span style="transform:scaleX(0.8807)">John</span></div>
<div class="t" style="left:277px;top:346px;font-size:13.9px;color:#1e1e1e;transform:translate3d(0,0.33px,0);-webkit-text-stroke:0.35px currentColor;"><span style="transform:scaleX(0.9055)">2786</span></div>
<div class="t" style="left:91px;top:366px;font-size:13.3px;color:#1e1e1e;-webkit-text-stroke:0.35px currentColor;"><span style="transform:scaleX(0.9008)">Shanaya</span></div>
<div class="t" style="left:277px;top:365px;font-size:13.9px;color:#1e1e1e;-webkit-text-stroke:0.35px currentColor;"><span style="transform:scaleX(0.9334)">1167</span></div>
<div class="abs" style="left:699.6px;top:216px;width:18px;height:290.5px;background:#101214;"></div>
<div class="abs" style="left:700.5px;top:217px;width:16.5px;height:289px;background:#141414;border-radius:6px;"></div>
<svg class="abs" style="left:704.3px;top:221px;" width="8.2" height="5.8" viewBox="0 0 8.2 5.8"><path d="M4.1 0.6 L7.6 5.2 H0.6 Z" fill="#a6a6a6" stroke="#a6a6a6" stroke-width="1" stroke-linejoin="round"/></svg>
<div class="abs" style="left:705px;top:231px;width:7px;height:177px;background:#9e9e9e;border-radius:3.5px;"></div>
<svg class="abs" style="left:704.3px;top:498px;" width="8.2" height="5.8" viewBox="0 0 8.2 5.8"><path d="M0.6 0.6 H7.6 L4.1 5.2 Z" fill="#a6a6a6" stroke="#a6a6a6" stroke-width="1" stroke-linejoin="round"/></svg>
<div class="abs" style="left:718.6px;top:42px;width:1.4px;height:110px;background:#2c2c2c;"></div>
<div class="abs" style="left:718.8px;top:145px;width:1.2px;height:4px;background:#8a8a8a;"></div>
<div class="abs" style="left:717.8px;top:157.6px;width:2.2px;height:391.6px;background:#d6d6d6;"></div>
<div class="abs" style="left:0px;top:36.3px;width:2.4px;height:5.6px;background:#9a9a9a;border-radius:0 2px 2px 0;"></div>
<div class="abs" style="left:39px;top:554.6px;width:11px;height:1.4px;background:#9a9a9a;"></div>
<div class="abs" style="left:644px;top:554.6px;width:12px;height:1.4px;background:#8a8a8a;"></div>
<div class="abs" style="left:704px;top:554.6px;width:10px;height:1.4px;background:#8a8a8a;"></div>
<!-- ===== sheet tabs ===== -->
<div class="abs" style="left:4px;top:506.7px;width:713px;height:27.6px;background:#070c12;"></div>
<svg class="abs" style="left:23.8px;top:515.2px;" width="5.8" height="9.2" viewBox="0 0 5.8 9.2"><path d="M5 0.6 L0.8 4.6 L5 8.6" fill="none" stroke="#a8a8a8" stroke-width="1.2" stroke-linecap="round" stroke-linejoin="round"/></svg>
<svg class="abs" style="left:52.2px;top:515.2px;" width="5.8" height="9.2" viewBox="0 0 5.8 9.2"><path d="M0.8 0.6 L5 4.6 L0.8 8.6" fill="none" stroke="#a8a8a8" stroke-width="1.2" stroke-linecap="round" stroke-linejoin="round"/></svg>
<div class="t" style="left:108px;top:512px;font-size:13.6px;color:#e0e0e0;"><span style="transform:scaleX(0.8305)">Sheet1</span></div>
<div class="t" style="left:166px;top:512px;font-size:13.6px;color:#e0e0e0;"><span style="transform:scaleX(0.8468)">Sheet2</span></div>
<div class="t" style="left:225px;top:512px;font-size:13.6px;color:#e0e0e0;"><span style="transform:scaleX(0.8514)">Sheet3</span></div>
<div class="t" style="left:285px;top:512px;font-size:13.6px;color:#e0e0e0;"><span style="transform:scaleX(0.8444)">Sheet4</span></div>
<svg class="abs" style="left:0px;top:0px;" width="720" height="556" viewBox="0 0 720 556"><rect x="153.90" y="512" width="1.2" height="16.4" fill="#3c4046"/><rect x="213.00" y="512" width="1.2" height="16.4" fill="#3c4046"/><rect x="272.40" y="512" width="1.2" height="16.4" fill="#3c4046"/><rect x="332.50" y="512" width="1.2" height="16.4" fill="#3c4046"/></svg>
<svg class="abs" style="left:332px;top:506.3px;" width="34" height="25" viewBox="0 0 34 25"><path d="M3 0 Q5.3 0 5.3 2.2 V22 Q5.3 24.5 7.8 24.5 H33.4 V0 Z" fill="#ffffff"/></svg>
<div class="t" style="left:344px;top:509px;font-size:13.6px;color:#222222;-webkit-text-stroke:0.3px currentColor;"><span style="transform:scaleX(0.8444)">She</span></div>
<div class="abs" style="left:344.2px;top:526.8px;width:20.9px;height:1.8px;background:#2f7f55;"></div>
<div class="abs" style="left:365px;top:506.7px;width:352px;height:27.6px;background:#070c12;"></div>
<div class="abs" style="left:373.6px;top:518.6px;width:2.5px;height:2.5px;background:#e6e6e6;border-radius:1.25px;"></div>
<div class="abs" style="left:377.7px;top:518.6px;width:2.5px;height:2.5px;background:#e6e6e6;border-radius:1.25px;"></div>
<div class="abs" style="left:381.8px;top:518.6px;width:2.5px;height:2.5px;background:#e6e6e6;border-radius:1.25px;"></div>
<svg class="abs" style="left:401.3px;top:514.6px;" width="10.4" height="10.4" viewBox="0 0 10.4 10.4"><path d="M5.2 0.4 V10 M0.4 5.2 H10" stroke="#dcdcdc" stroke-width="1.2" stroke-linecap="round" fill="none"/></svg>
<div class="abs" style="left:433.8px;top:516.5px;width:2.2px;height:2.2px;background:#d0d0d0;"></div>
<div class="abs" style="left:433.8px;top:519.9px;width:2.2px;height:2.2px;background:#d0d0d0;"></div>
<div class="abs" style="left:433.8px;top:523.3px;width:2.2px;height:2.2px;background:#d0d0d0;"></div>
<div class="abs" style="left:447px;top:510.6px;width:254px;height:18.6px;background:#0c0f15;border-radius:9px;"></div>
<svg class="abs" style="left:453.2px;top:516px;" width="6.6" height="8" viewBox="0 0 6.6 8"><path d="M6 0.8 V7.2 L0.8 4 Z" fill="#a0a0a0" stroke="#a0a0a0" stroke-width="1" stroke-linejoin="round"/></svg>
<div class="abs" style="left:464.2px;top:516.2px;width:209.4px;height:7.6px;background:#9e9e9e;border-radius:3.8px;"></div>
<svg class="abs" style="left:689.9px;top:516px;" width="6.6" height="8" viewBox="0 0 6.6 8"><path d="M0.6 0.8 V7.2 L5.8 4 Z" fill="#a0a0a0" stroke="#a0a0a0" stroke-width="1" stroke-linejoin="round"/></svg>
<!-- ===== status bar ===== -->
<div class="abs" style="left:4px;top:534.3px;width:713px;height:18.7px;background:#141414;border-top:1px solid #242424;border-radius:0 0 7px 7px;"></div>
<div class="t" style="left:14px;top:535px;font-size:10.8px;color:#e0e0e0;"><span style="transform:scaleX(0.8008)">Ready</span></div>
<svg class="abs" style="left:54.2px;top:539px;" width="13.6" height="11.8" viewBox="0 0 13.6 11.8"><rect x="0.6" y="0.6" width="11.6" height="9.8" rx="0.8" fill="none" stroke="#dcdcdc" stroke-width="1.1"/><path d="M0.6 3 H12.2" stroke="#dcdcdc" stroke-width="1" fill="none"/><path d="M2.6 5.4 H5 M2.6 7.6 H4.4" stroke="#dcdcdc" stroke-width="0.9" fill="none"/><circle cx="9.2" cy="7.8" r="3.6" fill="#141414" stroke="#dcdcdc" stroke-width="1.1"/><circle cx="9.2" cy="7.8" r="1.6" fill="#f0f0f0"/></svg>
<svg class="abs" style="left:81.6px;top:538.2px;" width="13.6" height="12.6" viewBox="0 0 13.6 12.6"><circle cx="5.6" cy="1.9" r="1.5" fill="none" stroke="#dcdcdc" stroke-width="1"/><path d="M0.6 4.6 L4 5.6 H7.2 L10.6 4.6 M4 5.6 L3.6 8.4 L1.6 12 M7.2 5.6 L7.4 8 M5.6 8.6 L3.8 12" fill="none" stroke="#dcdcdc" stroke-width="1" stroke-linecap="round" stroke-linejoin="round"/><path d="M8 8 L12.8 12.2 M12.8 8 L8 12.2" fill="none" stroke="#dcdcdc" stroke-width="1.1" stroke-linecap="round"/></svg>
<div class="t" style="left:98px;top:535px;font-size:10.6px;color:#f0f0f0;font-weight:bold;"><span style="transform:scaleX(0.8621)">Accessibility: Investigate</span></div>
<div class="abs" style="left:448px;top:535px;width:35px;height:18.4px;background:#2c2c2c;"></div>
<svg class="abs" style="left:459.2px;top:538px;" width="11.8" height="11.8" viewBox="0 0 11.8 11.8"><rect x="0.6" y="0.6" width="10.6" height="10.6" rx="0.6" fill="none" stroke="#e6e6e6" stroke-width="1.2"/><path d="M4.1 0.6 V11.2 M7.7 0.6 V11.2 M0.6 4.1 H11.2 M0.6 7.7 H11.2" stroke="#e6e6e6" stroke-width="1.1" fill="none"/></svg>
<svg class="abs" style="left:494.2px;top:538px;" width="12.8" height="11.8" viewBox="0 0 12.8 11.8"><rect x="0.6" y="0.6" width="11.6" height="10.6" rx="0.6" fill="none" stroke="#e0e0e0" stroke-width="1.2"/><rect x="3.8" y="2.8" width="5.2" height="6.2" fill="none" stroke="#e0e0e0" stroke-width="0.9"/><path d="M5 5 H7.8 M5 6.8 H7.8" stroke="#e0e0e0" stroke-width="0.7" fill="none"/></svg>
<svg class="abs" style="left:528.8px;top:538px;" width="13.2" height="11.8" viewBox="0 0 13.2 11.8"><rect x="0.6" y="0.6" width="12" height="10.6" rx="0.6" fill="none" stroke="#e0e0e0" stroke-width="1.2"/><path d="M4.6 0.6 V6.6 M0.6 6.6 H9 V0.6" stroke="#e0e0e0" stroke-width="1.1" fill="none"/></svg>
<svg class="abs" style="left:0px;top:0px;" width="720" height="556" viewBox="0 0 720 556"><rect x="557.2" y="543.6" width="7.4" height="1.2" fill="#9a9a9a"/><rect x="569.2" y="543.7" width="86.2" height="1.1" fill="#b4b4b4"/><rect x="610" y="539.2" width="4.6" height="10" rx="0.6" fill="#bcbcbc"/><path d="M659.8 544.2 H667 M663.4 540.8 V547.6" stroke="#b0b0b0" stroke-width="1.2" fill="none"/></svg>
<div class="t" style="left:678px;top:534px;font-size:10.6px;color:#e0e0e0;transform:translate3d(0,0.80px,0);"><span style="transform:scaleX(0.8336)">100%</span></div>
</div>
</body>
</html>
